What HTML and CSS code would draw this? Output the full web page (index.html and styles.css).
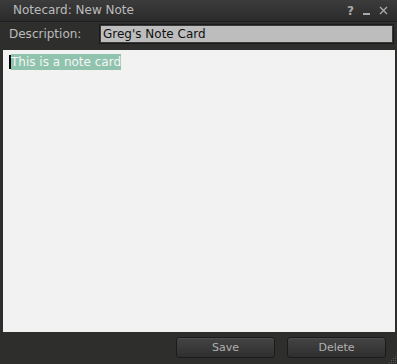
FILE: index.html
```html
<!DOCTYPE html>
<html>
<head>
<meta charset="utf-8">
<link rel="stylesheet" href="styles.css">
</head>
<body>
<div class="window">
  <div class="titlebar">
    <span class="title">Notecard: New Note</span>
    <div class="controls">
      <span class="ctl help">?</span>
      <span class="ctl min"></span>
      <svg class="ctl close" width="9" height="9" viewBox="0 0 9 9"><path d="M1 1L8 8M8 1L1 8" stroke="#a9a9a9" stroke-width="1.4"/></svg>
    </div>
  </div>
  <div class="descrow">
    <span class="label">Description:</span>
    <div class="input">Greg's Note Card</div>
  </div>
  <div class="editor">
    <span class="caret"></span><span class="sel">This is a note card</span>
  </div>
  <div class="footer">
    <button class="btn">Save</button>
    <button class="btn">Delete</button>
    <svg class="grip" width="10" height="10" viewBox="0 0 10 10">
      <g fill="#5a5a5a"><rect x="8" y="2" width="1" height="1"/><rect x="6" y="4" width="1" height="1"/><rect x="8" y="4" width="1" height="1"/><rect x="4" y="6" width="1" height="1"/><rect x="6" y="6" width="1" height="1"/><rect x="8" y="6" width="1" height="1"/><rect x="2" y="8" width="1" height="1"/><rect x="4" y="8" width="1" height="1"/><rect x="6" y="8" width="1" height="1"/><rect x="8" y="8" width="1" height="1"/></g>
    </svg>
  </div>
</div>
</body>
</html>
```
FILE: styles.css
```css
* { box-sizing: border-box; }
html, body { margin: 0; padding: 0; }
body { width: 397px; height: 364px; overflow: hidden; background: #2e2f2d; font-family: "DejaVu Sans", sans-serif; }
.window { width: 397px; height: 364px; display: flex; flex-direction: column; background: #2e2f2d; }
.titlebar { height: 22px; flex: none; border-bottom: 1px solid #1e1e1e; background: linear-gradient(#3c3c3c, #2a2a2a); display: flex; align-items: center; justify-content: space-between; padding: 0 9px 0 13px; }
.title { color: #bcbcbc; font-size: 12px; line-height: 21px; }
.controls { display: flex; align-items: center; gap: 9px; }
.ctl.help { color: #a9a9a9; font-weight: bold; font-size: 12px; line-height: 12px; }
.ctl.min { width: 7px; height: 2px; background: #a9a9a9; margin-top: 6px; }
.descrow { display: flex; align-items: flex-start; height: 26px; flex: none; padding: 2px 3px 0 9px; }
.label { color: #bcbcbc; font-size: 12px; width: 90px; line-height: 20px; }
.input { flex: 1; height: 20px; background: #bdbdbd; border: 1px solid #1a1a1a; box-shadow: inset 0 0 0 1px #3a3a3a; color: #111; font-size: 12px; line-height: 18px; padding-left: 3px; }
.editor { margin: 2px 2px 0 3px; height: 282px; flex: none; background: #f2f2f2; padding: 5px 0 0 6px; font-size: 12px; line-height: 15px; color: #f5f5f5; }
.caret { display: inline-block; width: 2px; height: 14px; background: #000; vertical-align: -3px; }
.sel { background: #8fc3ad; padding: 1px 0; }
.footer { flex: 1; display: flex; align-items: center; justify-content: flex-end; gap: 12px; padding: 0 11px 2px 0; position: relative; }
.btn { width: 99px; height: 21px; border: 1px solid #1b1b1b; border-radius: 3px; background: linear-gradient(#444, #2f2f2f); box-shadow: inset 0 1px 0 #4e4e4e; color: #b0b0b0; font-family: "DejaVu Sans", sans-serif; font-size: 11px; padding: 0; }
.grip { position: absolute; right: 0; bottom: 0; }
```
